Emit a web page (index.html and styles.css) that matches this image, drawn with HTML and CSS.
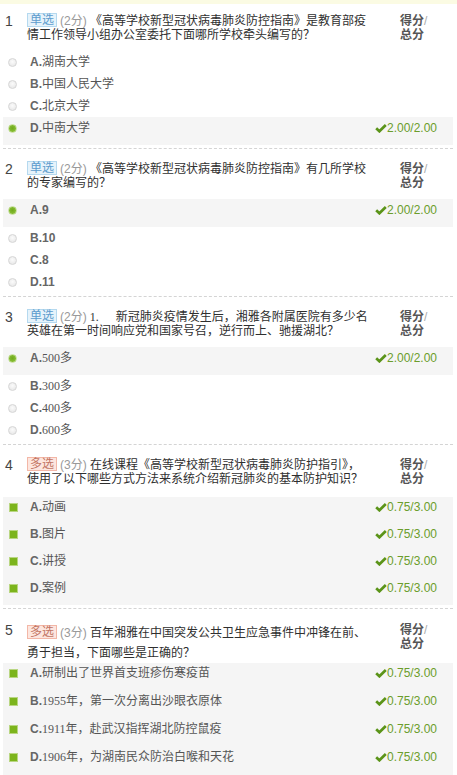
FILE: index.html
```html
<!DOCTYPE html>
<html lang="zh-CN">
<head>
<meta charset="utf-8">
<title>测验结果</title>
<link rel="stylesheet" href="styles.css">
</head>
<body>
<div class="band"></div>
<div class="list">

  <div class="q q-first">
    <div class="q-head">
      <span class="q-num">1</span>
      <div class="q-title"><span class="tag tag-single">单选</span><span class="pts">(2分)</span> 《高等学校新型冠状病毒肺炎防控指南》是教育部疫<br>情工作领导小组办公室委托下面哪所学校牵头编写的？</div>
      <div class="q-total"><b>得分</b><i>/</i><br><b>总分</b></div>
    </div>
    <ul class="opts">
      <li class="opt"><span class="radio"></span><span class="lbl">A.</span><span>湖南大学</span></li>
      <li class="opt"><span class="radio"></span><span class="lbl">B.</span><span>中国人民大学</span></li>
      <li class="opt"><span class="radio"></span><span class="lbl">C.</span><span>北京大学</span></li>
      <li class="opt correct"><span class="radio on"></span><span class="lbl">D.</span><span>中南大学</span><span class="score"><svg class="ok" viewBox="0 0 12 9" width="12" height="9"><path d="M1.2 4.2 L4.4 7.3 L10.8 1"/></svg>2.00/2.00</span></li>
    </ul>
  </div>

  <div class="q">
    <div class="q-head">
      <span class="q-num">2</span>
      <div class="q-title"><span class="tag tag-single">单选</span><span class="pts">(2分)</span> 《高等学校新型冠状病毒肺炎防控指南》有几所学校<br>的专家编写的？</div>
      <div class="q-total"><b>得分</b><i>/</i><br><b>总分</b></div>
    </div>
    <ul class="opts">
      <li class="opt correct"><span class="radio on"></span><span class="lbl">A.9</span><span class="score"><svg class="ok" viewBox="0 0 12 9" width="12" height="9"><path d="M1.2 4.2 L4.4 7.3 L10.8 1"/></svg>2.00/2.00</span></li>
      <li class="opt"><span class="radio"></span><span class="lbl">B.10</span></li>
      <li class="opt"><span class="radio"></span><span class="lbl">C.8</span></li>
      <li class="opt"><span class="radio"></span><span class="lbl">D.11</span></li>
    </ul>
  </div>

  <div class="q">
    <div class="q-head">
      <span class="q-num">3</span>
      <div class="q-title"><span class="tag tag-single">单选</span><span class="pts">(2分)</span><span class="lead-num">1.</span>新冠肺炎疫情发生后，湘雅各附属医院有多少名<br>英雄在第一时间响应党和国家号召，逆行而上、驰援湖北？</div>
      <div class="q-total"><b>得分</b><i>/</i><br><b>总分</b></div>
    </div>
    <ul class="opts">
      <li class="opt correct"><span class="radio on"></span><span class="lbl">A.</span><span><span class="serif">500</span>多</span><span class="score"><svg class="ok" viewBox="0 0 12 9" width="12" height="9"><path d="M1.2 4.2 L4.4 7.3 L10.8 1"/></svg>2.00/2.00</span></li>
      <li class="opt"><span class="radio"></span><span class="lbl">B.</span><span><span class="serif">300</span>多</span></li>
      <li class="opt"><span class="radio"></span><span class="lbl">C.</span><span><span class="serif">400</span>多</span></li>
      <li class="opt"><span class="radio"></span><span class="lbl">D.</span><span><span class="serif">600</span>多</span></li>
    </ul>
  </div>

  <div class="q">
    <div class="q-head multi-head">
      <span class="q-num">4</span>
      <div class="q-title"><span class="tag tag-multi">多选</span><span class="pts">(3分)</span> 在线课程《高等学校新型冠状病毒肺炎防护指引》，<br>使用了以下哪些方式方法来系统介绍新冠肺炎的基本防护知识？</div>
      <div class="q-total"><b>得分</b><i>/</i><br><b>总分</b></div>
    </div>
    <ul class="opts multi">
      <li class="opt"><span class="chk"></span><span class="lbl">A.</span><span>动画</span><span class="score"><svg class="ok" viewBox="0 0 12 9" width="12" height="9"><path d="M1.2 4.2 L4.4 7.3 L10.8 1"/></svg>0.75/3.00</span></li>
      <li class="opt"><span class="chk"></span><span class="lbl">B.</span><span>图片</span><span class="score"><svg class="ok" viewBox="0 0 12 9" width="12" height="9"><path d="M1.2 4.2 L4.4 7.3 L10.8 1"/></svg>0.75/3.00</span></li>
      <li class="opt"><span class="chk"></span><span class="lbl">C.</span><span>讲授</span><span class="score"><svg class="ok" viewBox="0 0 12 9" width="12" height="9"><path d="M1.2 4.2 L4.4 7.3 L10.8 1"/></svg>0.75/3.00</span></li>
      <li class="opt"><span class="chk"></span><span class="lbl">D.</span><span>案例</span><span class="score"><svg class="ok" viewBox="0 0 12 9" width="12" height="9"><path d="M1.2 4.2 L4.4 7.3 L10.8 1"/></svg>0.75/3.00</span></li>
    </ul>
  </div>

  <div class="q q-last">
    <div class="q-head tall">
      <span class="q-num">5</span>
      <div class="q-title"><span class="tag tag-multi">多选</span><span class="pts">(3分)</span> 百年湘雅在中国突发公共卫生应急事件中冲锋在前、<br>勇于担当，下面哪些是正确的？</div>
      <div class="q-total"><b>得分</b><i>/</i><br><b>总分</b></div>
    </div>
    <ul class="opts multi wide-rows">
      <li class="opt"><span class="chk"></span><span class="lbl">A.</span><span>研制出了世界首支班疹伤寒疫苗</span><span class="score"><svg class="ok" viewBox="0 0 12 9" width="12" height="9"><path d="M1.2 4.2 L4.4 7.3 L10.8 1"/></svg>0.75/3.00</span></li>
      <li class="opt"><span class="chk"></span><span class="lbl">B.</span><span><span class="serif">1955</span>年，第一次分离出沙眼衣原体</span><span class="score"><svg class="ok" viewBox="0 0 12 9" width="12" height="9"><path d="M1.2 4.2 L4.4 7.3 L10.8 1"/></svg>0.75/3.00</span></li>
      <li class="opt"><span class="chk"></span><span class="lbl">C.</span><span><span class="serif">1911</span>年，赴武汉指挥湖北防控鼠疫</span><span class="score"><svg class="ok" viewBox="0 0 12 9" width="12" height="9"><path d="M1.2 4.2 L4.4 7.3 L10.8 1"/></svg>0.75/3.00</span></li>
      <li class="opt"><span class="chk"></span><span class="lbl">D.</span><span><span class="serif">1906</span>年，为湖南民众防治白喉和天花</span><span class="score"><svg class="ok" viewBox="0 0 12 9" width="12" height="9"><path d="M1.2 4.2 L4.4 7.3 L10.8 1"/></svg>0.75/3.00</span></li>
    </ul>
  </div>

</div>
</body>
</html>
```

FILE: styles.css
```css
* { box-sizing: border-box; }

body {
  margin: 0;
  background: #ffffff;
  font-family: "Liberation Sans", Arial, "Noto Sans CJK SC", sans-serif;
  font-size: 12px;
  color: #333333;
}

.band {
  height: 4px;
  background: #fbfbe3;
}

.list {
  margin-left: 3px;
  width: 450px;
}

.q {
  padding: 13px 0 3px;
  border-bottom: 1px dashed #d4d4d4;
}

.q-first { padding-top: 10px; }
.q-last { padding-top: 14px; border-bottom: none; }

.q-head {
  display: flex;
  align-items: flex-start;
  line-height: 14px;
  margin-bottom: 9px;
}

.q-head.multi-head { margin-bottom: 11px; }
.q-head.tall { margin-bottom: 0; }
.q-head.tall .q-title { line-height: 20px; }
.q-head.tall .tag { margin-top: 2px; }

.q-num {
  width: 24px;
  padding-left: 2px;
  font-size: 14px;
  line-height: 14px;
  color: #444444;
}

.q-title {
  flex: 1;
  white-space: nowrap;
  color: #2f2f2f;
}

.tag {
  display: inline-block;
  vertical-align: top;
  margin-top: -1px;
  margin-right: 3px;
  height: 14px;
  padding: 0 2px;
  border: 1px solid;
  line-height: 12px;
  font-size: 12px;
}

.tag-single {
  background: #e6f3fb;
  border-color: #b5d9ef;
  color: #5d9ccd;
}

.tag-multi {
  background: #fde6df;
  border-color: #f3b7a7;
  color: #c27564;
}

.pts { color: #999999; }

.lead-num {
  font-family: "Liberation Serif", "Times New Roman", serif;
  margin-left: 3px;
  margin-right: 17px;
  color: #333333;
}

.q-total {
  width: 53px;
  line-height: 14px;
  color: #555555;
}

.q-total b { font-weight: bold; }
.q-total i { font-style: normal; color: #aaaaaa; font-weight: normal; }

.opts {
  list-style: none;
  margin: 0;
  padding: 0;
}

.opt {
  display: flex;
  align-items: center;
  line-height: 22px;
  padding-left: 5px;
  color: #555555;
}

.opt.correct {
  background: #f5f5f5;
  padding-bottom: 6px;
}

.opts.multi { background: #f5f5f5; }

.opts.multi .opt {
  line-height: 20px;
  padding-bottom: 7px;
}

.opts.multi.wide-rows .opt { padding-bottom: 8px; }

.radio {
  width: 9px;
  height: 9px;
  margin-right: 13px;
  border-radius: 50%;
  border: 1px solid #d6d6d6;
  background: radial-gradient(circle at 50% 40%, #fbfbfb 0%, #e4e4e4 100%);
  flex: none;
}

.radio.on {
  border-color: #c4de98;
  background: radial-gradient(circle at 50% 45%, #6fa81c 0%, #88bf35 70%, #a9d168 100%);
}

.chk {
  width: 9px;
  height: 9px;
  margin-left: 1px;
  margin-right: 12px;
  border: 1px solid #b9d682;
  background: #7cb41c;
  flex: none;
}

.lbl {
  font-weight: bold;
  color: #666666;
}

.serif {
  font-family: "Liberation Serif", "Times New Roman", serif;
}

.score {
  margin-left: auto;
  padding-right: 16px;
  display: flex;
  align-items: center;
  color: #6b9d2b;
}

.ok {
  margin-right: 0;
  fill: none;
  stroke: #5b9419;
  stroke-width: 2.7;
}
```
